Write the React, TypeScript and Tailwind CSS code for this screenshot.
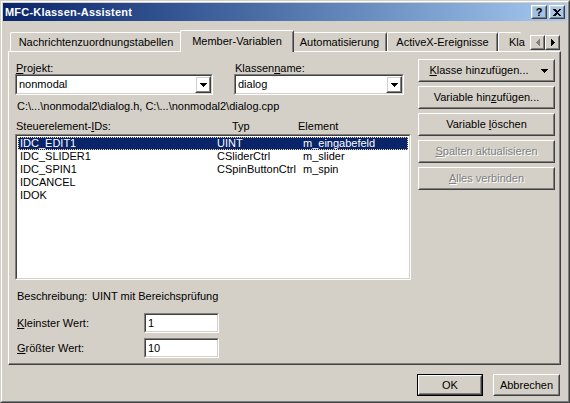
import type { ReactNode } from 'react';

// classic Win2000 dialog chrome
const FACE = 'bg-[#d4d0c8]';

function U({ children }: { children: ReactNode }) {
  return <span className="underline decoration-1 underline-offset-[1px]">{children}</span>;
}

function Raised({ children, className = '', disabled = false, inner = '' }: { children?: ReactNode; className?: string; disabled?: boolean; inner?: string }) {
  return (
    <div className={`border border-t-white border-l-white border-r-[#404040] border-b-[#404040] ${className}`}>
      <div
        className={`flex h-full items-center justify-center border border-t-[#d4d0c8] border-l-[#d4d0c8] border-r-[#808080] border-b-[#808080] ${
          disabled ? 'text-[#808080] [text-shadow:1px_1px_0_#fff]' : ''
        } ${inner}`}
      >
        {children}
      </div>
    </div>
  );
}

function Sunken({ children, className = '' }: { children?: ReactNode; className?: string }) {
  return (
    <div className={`border border-t-[#808080] border-l-[#808080] border-r-white border-b-white ${className}`}>
      <div className="h-full border border-t-[#404040] border-l-[#404040] border-r-[#d4d0c8] border-b-[#d4d0c8] bg-white">
        {children}
      </div>
    </div>
  );
}

function DownArrow({ color = '#000' }: { color?: string }) {
  return (
    <svg width="7" height="4" viewBox="0 0 7 4" fill={color} shapeRendering="crispEdges">
      <rect x="0" y="0" width="7" height="1" />
      <rect x="1" y="1" width="5" height="1" />
      <rect x="2" y="2" width="3" height="1" />
      <rect x="3" y="3" width="1" height="1" />
    </svg>
  );
}

function SideArrow({ dir, color }: { dir: 'left' | 'right'; color: string }) {
  const cols = dir === 'right' ? [0, 1, 2, 3] : [3, 2, 1, 0];
  return (
    <svg width="4" height="7" viewBox="0 0 4 7" fill={color} shapeRendering="crispEdges">
      {cols.map((x, i) => (
        <rect key={i} x={x} y={i} width="1" height={7 - i * 2} />
      ))}
    </svg>
  );
}

function Combo({ value, className }: { value: string; className: string }) {
  return (
    <Sunken className={`h-[21px] ${className}`}>
      <div className="flex h-full items-center">
        <span className="flex-1 pl-[2px] leading-[13px]">{value}</span>
        <Raised className="h-full w-[16px]">
          <DownArrow />
        </Raised>
      </div>
    </Sunken>
  );
}

function Tab({ label, w, selected = false, clip = false }: { label: string; w: string; selected?: boolean; clip?: boolean }) {
  if (selected) {
    return (
      <div
        className={`relative z-10 -mx-[2px] -mb-[1px] flex h-[22px] ${w} items-start justify-center rounded-t-[2px] border-t border-l border-r border-t-white border-l-white border-r-[#404040] ${FACE} pt-[4px]`}
      >
        <div className="absolute right-0 top-[1px] bottom-0 w-px bg-[#808080]" />
        {label}
      </div>
    );
  }
  return (
    <div
      className={`relative flex h-[19px] ${w} shrink-0 items-start rounded-t-[2px] border-t border-l border-t-white border-l-white ${
        clip ? 'pl-[10px]' : 'justify-center border-r border-r-[#404040]'
      } pt-[3px]`}
    >
      {!clip && <div className="absolute right-0 top-[1px] bottom-0 w-px bg-[#808080]" />}
      {label}
    </div>
  );
}

const rows = [
  ['IDC_EDIT1', 'UINT', 'm_eingabefeld'],
  ['IDC_SLIDER1', 'CSliderCtrl', 'm_slider'],
  ['IDC_SPIN1', 'CSpinButtonCtrl', 'm_spin'],
  ['IDCANCEL', '', ''],
  ['IDOK', '', ''],
];

export default function App() {
  return (
    <div className="h-[403px] w-[570px] font-['Liberation_Sans',Arial,sans-serif] text-[11px] leading-[13px] text-black">
      <div className={`h-full border border-t-[#d4d0c8] border-l-[#d4d0c8] border-r-[#404040] border-b-[#404040] ${FACE}`}>
        <div className="flex h-full flex-col border border-t-white border-l-white border-r-[#808080] border-b-[#808080] p-px">
          {/* title bar */}
          <div className="flex h-[18px] shrink-0 items-center bg-gradient-to-r from-[#0a246a] to-[#a6caf0] pl-[2px] pr-[2px]">
            <span className="flex-1 text-[11px] font-bold tracking-[0.2px] text-white">MFC-Klassen-Assistent</span>
            <Raised className="h-[14px] w-[16px]" inner="font-bold text-[11px] leading-[11px]">
              ?
            </Raised>
            <Raised className="ml-[2px] h-[14px] w-[16px]">
              <svg width="8" height="7" viewBox="0 0 8 7" shapeRendering="crispEdges">
                <path d="M0 0h2l2 2 2-2h2L5 3.5 8 7H6L4 5 2 7H0l3-3.5z" fill="#000" />
              </svg>
            </Raised>
          </div>

          <div className="flex flex-1 flex-col pl-[5px] pr-[6px]">
            {/* tabs */}
            <div className="mt-[9px] flex h-[21px] items-end">
              <div className="flex flex-1 items-end pl-[2px]">
                <Tab label="Nachrichtenzuordnungstabellen" w="w-[172px]" />
                <Tab label="Member-Variablen" w="w-[114px]" selected />
                <Tab label="Automatisierung" w="w-[95px]" />
                <Tab label="ActiveX-Ereignisse" w="w-[111px]" />
                <Tab label="Kla" w="w-[23px]" clip />
              </div>
              <div className="mb-[1px] mr-px flex">
                <Raised className="h-[15px] w-[15px]">
                  <SideArrow dir="left" color="#808080" />
                </Raised>
                <Raised className="h-[15px] w-[15px]">
                  <SideArrow dir="right" color="#000" />
                </Raised>
              </div>
            </div>

            {/* panel */}
            <div className="h-[314px] border border-t-white border-l-white border-r-[#404040] border-b-[#404040]">
              <div className="flex h-full border-r border-b border-r-[#808080] border-b-[#808080] pl-[6px]">
                <div className="flex w-[396px] flex-col pt-[10px]">
                  <div className="flex h-[12px]">
                    <span className="w-[219px] pl-px">
                      <U>P</U>rojekt:
                    </span>
                    <span className="pl-px">
                      Klassen<U>n</U>ame:
                    </span>
                  </div>
                  <div className="flex gap-[21px]">
                    <Combo value="nonmodal" className="w-[198px]" />
                    <Combo value="dialog" className="w-[170px]" />
                  </div>
                  <div className="mt-[5px] pl-[2px]">C:\...\nonmodal2\dialog.h, C:\...\nonmodal2\dialog.cpp</div>
                  <div className="mt-[7px] flex">
                    <span className="w-[217px] pl-px">
                      Steuerelement-<U>I</U>Ds:
                    </span>
                    <span className="w-[66px]">Typ</span>
                    <span>Element</span>
                  </div>
                  <Sunken className="mt-px h-[146px] w-[396px]">
                    <div className="px-px pt-px">
                      {rows.map((r, i) => (
                        <div
                          key={r[0]}
                          className={`flex h-[13px] pl-[2px] ${
                            i === 0 ? 'bg-[#0a246a] text-white outline outline-1 -outline-offset-1 outline-dotted outline-[#f5db95]' : ''
                          }`}
                        >
                          <span className="w-[197px]">{r[0]}</span>
                          <span className="w-[86px]">{r[1]}</span>
                          <span>{r[2]}</span>
                        </div>
                      ))}
                    </div>
                  </Sunken>
                  <div className="mt-[10px] flex pl-[2px]">
                    <span className="w-[75px]">Beschreibung:</span>
                    <span>UINT mit Bereichsprüfung</span>
                  </div>
                  <div className="mt-[10px] flex h-[20px] items-center">
                    <span className="w-[129px] pl-[2px]">
                      <U>K</U>leinster Wert:
                    </span>
                    <Sunken className="h-[20px] w-[75px]">
                      <div className="pl-[2px] pt-[2px]">1</div>
                    </Sunken>
                  </div>
                  <div className="mt-[5px] flex h-[20px] items-center">
                    <span className="w-[129px] pl-[2px]">
                      <U>G</U>rößter Wert:
                    </span>
                    <Sunken className="h-[20px] w-[75px]">
                      <div className="pl-[2px] pt-[2px]">10</div>
                    </Sunken>
                  </div>
                </div>

                <div className="ml-[7px] flex w-[137px] flex-col gap-[4px] pt-[7px]">
                  <Raised className="h-[23px]" inner="gap-[12px] pl-[4px]">
                    <span>
                      <U>K</U>lasse hinzufügen...
                    </span>
                    <DownArrow />
                  </Raised>
                  <Raised className="h-[23px]">
                    <span>
                      Variable hin<U>z</U>ufügen...
                    </span>
                  </Raised>
                  <Raised className="h-[23px]">
                    <span>
                      Variable <U>l</U>öschen
                    </span>
                  </Raised>
                  <Raised className="h-[23px]" disabled>
                    <span>
                      <U>S</U>palten aktualisieren
                    </span>
                  </Raised>
                  <Raised className="h-[23px]" disabled>
                    <span>
                      <U>A</U>lles verbinden
                    </span>
                  </Raised>
                </div>
              </div>
            </div>

            {/* dialog buttons */}
            <div className="flex justify-end gap-[10px] pr-px pt-[9px]">
              <div className="h-[22px] w-[66px] border border-black">
                <Raised className="h-full">OK</Raised>
              </div>
              <Raised className="h-[22px] w-[67px]">Abbrechen</Raised>
            </div>
          </div>
        </div>
      </div>
    </div>
  );
}
